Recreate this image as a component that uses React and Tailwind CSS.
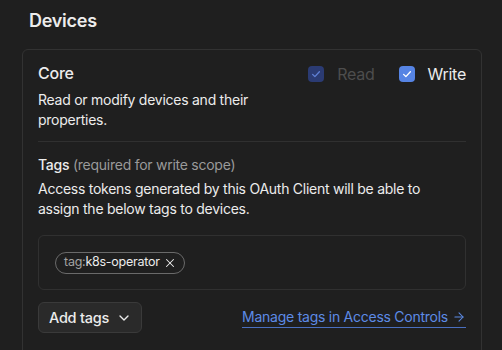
import { ChevronDown, X, ArrowRight } from 'lucide-react';

const Check = ({ dim }) => (
  <span
    className={
      'flex h-4 w-4 items-center justify-center rounded-[4px] ' +
      (dim ? 'bg-[#2b3b73]' : 'bg-[#5684e4]')
    }
  >
    <svg viewBox="0 0 16 16" className="h-3 w-3" fill="none">
      <path
        d="M3.5 8.5l3 3 6-6.5"
        stroke={dim ? '#5f7fd4' : '#ffffff'}
        strokeWidth="1.8"
        strokeLinecap="round"
        strokeLinejoin="round"
      />
    </svg>
  </span>
);

export default function App() {
  return (
    <div
      className="h-[350px] w-[502px] overflow-hidden bg-[#1f1f1f] pl-[22px] pr-[20px] tracking-[-0.016em] text-[#ececec]"
      style={{ fontFamily: 'Inter, "Noto Sans", sans-serif' }}
    >
      <h2 className="pl-[7px] pt-[8px] text-[18px] font-semibold leading-[26px]">Devices</h2>

      <div className="mt-[15px] rounded-[6px] border border-[#323232] px-[15px] pt-[11px] pb-6">
        <div className="flex items-start justify-between">
          <div className="text-[16px] font-medium leading-6">Core</div>
          <div className="flex items-center pt-[1px] text-[16px] leading-6">
            <label className="flex items-center gap-[13px] text-[#4d4d4d]">
              <Check dim />
              Read
            </label>
            <label className="ml-[25px] flex items-center gap-[12px]">
              <Check />
              Write
            </label>
          </div>
        </div>
        <p className="mt-[4px] w-[240px] text-[14px] leading-5">
          Read or modify devices and their properties.
        </p>

        <div className="mt-[11px] mb-[13px] h-px bg-[#303030]" />

        <div className="text-[14px] leading-5">
          <span className="font-medium">Tags</span>{' '}
          <span className="text-[#9a9a9a]">(required for write scope)</span>
        </div>
        <p className="mt-[4px] max-w-[405px] text-[14px] leading-5">
          Access tokens generated by this OAuth Client will be able to assign the below tags to devices.
        </p>

        <div className="mt-[16px] flex h-[55px] items-center rounded-[6px] border border-[#303030] px-4">
          <span className="flex h-[22px] items-center gap-[3px] rounded-full border border-[#6a6a6a] pl-[8px] pr-[7px] text-[12.5px]">
            <span>
              <span className="text-[#a3a3a3]">tag:</span>k8s-operator
            </span>
            <X size={14} strokeWidth={1.8} />
          </span>
        </div>

        <div className="mt-[12px] flex items-center justify-between">
          <button
            type="button"
            className="flex h-[31px] items-center gap-[7px] rounded-[6px] border border-[#3a3a3a] bg-[#2a2a2a] pl-[10px] pr-[9px] text-[14.5px] font-medium"
          >
            Add tags
            <ChevronDown size={16} strokeWidth={2} />
          </button>
          <a className="flex items-center gap-1 border-b border-[#4a6fbf] text-[14px] leading-5 text-[#5d8be6]">
            Manage tags in Access Controls
            <ArrowRight size={14} strokeWidth={1.8} />
          </a>
        </div>
      </div>
    </div>
  );
}
